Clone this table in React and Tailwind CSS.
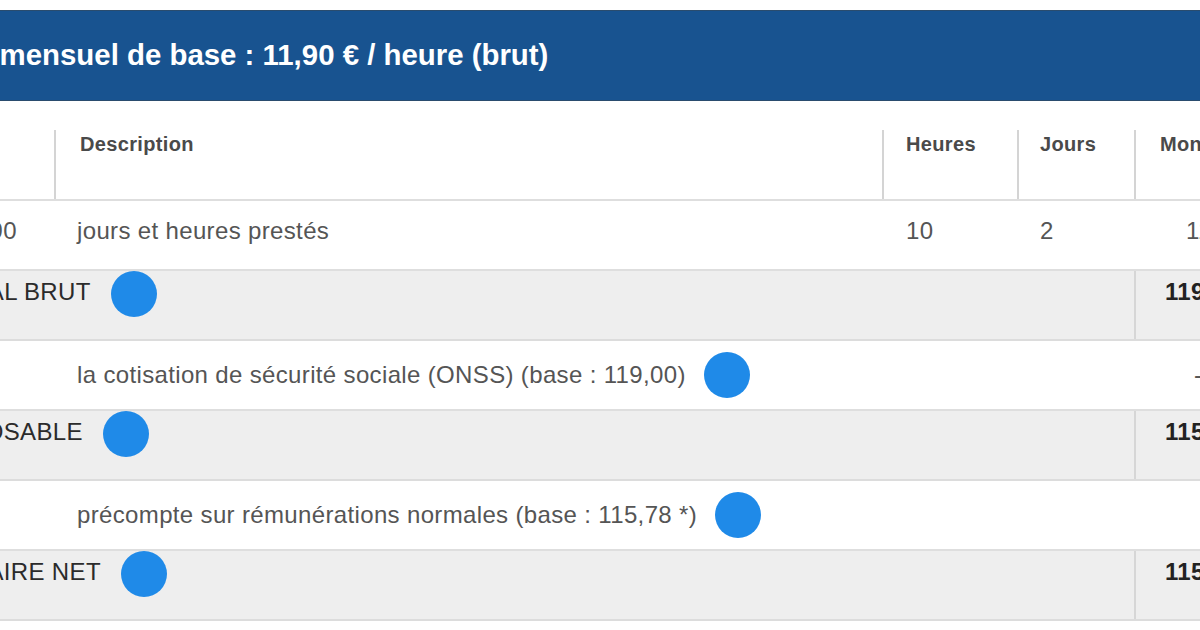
import React from "react";

const cols = "grid grid-cols-[134px_828px_135px_117px_200px]";

function Dot() {
  return <span className="block w-[46px] h-[46px] rounded-full bg-[#1f8ae8] shrink-0" />;
}

function TotalRow({ label, amount }) {
  return (
    <div className={`${cols} h-[70px] bg-[#eeeeee] border-b-2 border-[#dcdcdc]`}>
      <div className="col-span-4 pl-[21px] flex items-start gap-[20px]">
        <span className="mt-[7px] text-[#2b2b2b] whitespace-nowrap">{label}</span>
        <Dot />
      </div>
      <div className="border-l-2 border-[#d6d6d6] pl-[29px] pt-[7px] font-bold text-[#222]">{amount}</div>
    </div>
  );
}

function LineRow({ text, amount }) {
  return (
    <div className={`${cols} h-[70px] border-b-2 border-[#dedede]`}>
      <div />
      <div className="col-span-3 pl-[23px] flex items-center gap-[18px]">
        <span className="whitespace-nowrap">{text}</span>
        <Dot />
      </div>
      <div className="pl-[60px] self-center">{amount}</div>
    </div>
  );
}

export default function App() {
  return (
    <div className="w-[1200px] h-[630px] overflow-hidden bg-white font-['Liberation_Sans',Arial,sans-serif]">
      {/* Title bar */}
      <div className="mt-[10px] h-[91px] flex items-center bg-[#185390] border-y border-[#2a4c6e] overflow-hidden">
        <h2 className="ml-[-105px] whitespace-nowrap text-[29.4px] font-bold text-white">
          Salaire mensuel de base : 11,90 € / heure (brut)
        </h2>
      </div>

      {/* Table */}
      <div className="ml-[-80px] w-[1414px] text-[24px] leading-[28px] tracking-[0.35px] text-[#555]">
        <div className={`${cols} h-[100px] border-b-2 border-[#dedede] text-[20px] leading-[24px] font-bold text-[#4a4a4a]`}>
          <div className="mt-[29px] pl-[24px] pt-[2px]">Taux</div>
          <div className="mt-[29px] pl-[24px] pt-[2px] border-l-2 border-[#d4d4d4]">Description</div>
          <div className="mt-[29px] pl-[22px] pt-[2px] border-l-2 border-[#d4d4d4]">Heures</div>
          <div className="mt-[29px] pl-[21px] pt-[2px] border-l-2 border-[#d4d4d4]">Jours</div>
          <div className="mt-[29px] pl-[24px] pt-[2px] border-l-2 border-[#d4d4d4]">Montant</div>
        </div>

        <div className={`${cols} h-[70px] pb-[8px] border-b-2 border-[#dedede] items-center`}>
          <div className="text-center">11,90</div>
          <div className="pl-[23px]">jours et heures prestés</div>
          <div className="pl-[24px]">10</div>
          <div className="pl-[23px]">2</div>
          <div className="pl-[52px]">119,00</div>
        </div>

        <TotalRow label="TOTAL BRUT" amount="119,00" />
        <LineRow text="la cotisation de sécurité sociale (ONSS) (base : 119,00)" amount="-15,55" />
        <TotalRow label="IMPOSABLE" amount="115,78" />
        <LineRow text="précompte sur rémunérations normales (base : 115,78 *)" amount="" />
        <TotalRow label="SALAIRE NET" amount="115,78" />
      </div>
    </div>
  );
}
